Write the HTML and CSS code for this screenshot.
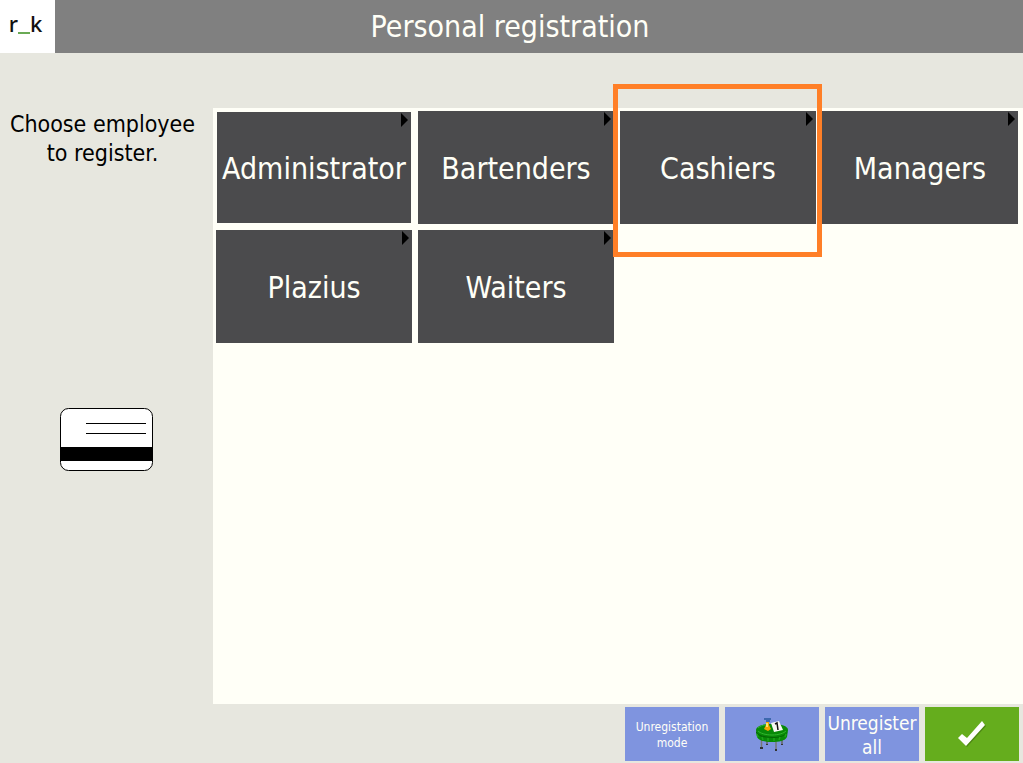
FILE: index.html
```html
<!DOCTYPE html>
<html lang="en">
<head>
  <meta charset="UTF-8" />
  <meta name="viewport" content="width=device-width, initial-scale=1.0" />
  <title>Personal registration</title>
  <link rel="stylesheet" href="styles.css">
</head>
<body>
  <header class="topbar">
    <div class="logo">r<span class="logo-dash"></span>k</div>
    <h1 class="title">Personal registration</h1>
  </header>

  <main class="content">
    <aside class="sidebar">
      <p class="hint">Choose employee<br>to register.</p>
      <svg class="card-icon" width="93" height="63" viewBox="0 0 93 63">
        <rect x="0.5" y="0.5" width="92" height="62" rx="8" fill="#fff" stroke="#000" />
        <path d="M26 15.5h60M26 25.5h60" stroke="#000" />
        <rect x="1" y="39" width="91" height="14" />
      </svg>
    </aside>

    <section class="groups">
      <button class="tile focused">Administrator</button>
      <button class="tile">Bartenders</button>
      <button class="tile highlighted">Cashiers</button>
      <button class="tile">Managers</button>
      <button class="tile">Plazius</button>
      <button class="tile">Waiters</button>
    </section>
  </main>

  <footer class="actions">
    <button class="action small">Unregistation<br>mode</button>
    <button class="action" aria-label="Tables">
      <svg width="34" height="34" viewBox="0 0 34 34">
        <path d="M12 22v5M27 22v5" stroke="#666" stroke-width="1.5" />
        <path d="M6.500 22v8M21 23v9" stroke="#777" stroke-width="1.5" />
        <path d="M5 29h3v2H5zM20 31h2v2h-2zM11 26h2v1h-2zM26 26h2v1h-2z" fill="#333" />
        <path d="M1 12c0-4 7-6 16-6s16 2 16 6l-1 7c-2 4-8 5-15 5S4 23 2 19z" fill="#088a08" />
        <path d="M1 13c2 4 8 6 16 6s14-2 16-6l-1 2c-3 4-8 5-15 5S4 19 1 15z" fill="#056604" />
        <path d="M3 10c2-2 5-3 8-3M3 13c2 2 7 4 14 4s12-2 14-4" fill="none" stroke="#32b52d" />
        <path d="M2 16l1 3M7 19l1 3M13 20v3M19 20v3M25 19l-1 3M31 16l-1 3" stroke="#1da51a" stroke-width="1.5" />
        <path d="M9 1h7M11 3h4" stroke="#285a9d" stroke-width="1.5" />
        <path d="M11 4h3v3l2 4-3 2-4-2 2-4z" fill="#f5a400" />
        <path d="M11 5h2v4h-2z" fill="#ffe366" />
        <path d="M16 5l8-2 4 9-9 2z" fill="#f8f8f3" />
        <path d="M20 6l2-1 1 7" fill="none" stroke="#111" stroke-width="1.5" />
      </svg>
    </button>
    <button class="action medium">Unregister<br>all</button>
    <button class="action confirm" aria-label="Confirm">
      <svg width="28" height="26" viewBox="0 0 28 26">
        <path d="M1 18l4-4 4 4L24 1l4 4L9 26z" fill="#4d8713" />
        <path d="M0 17l4-4 5 4L24 0l3 4L8 25z" fill="#fff" />
      </svg>
    </button>
  </footer>
</body>
</html>
```
FILE: styles.css
```css
* {
  box-sizing: border-box;
}
body {
  display: flex;
  flex-direction: column;
  min-height: 100vh;
  margin: 0;
  background: #e7e7df;
  color: #000;
  font-family: Tahoma, "DejaVu Sans Condensed", "Noto Sans", sans-serif;
}
button {
  border: none;
  padding: 0;
  color: #fffff7;
  font-family: inherit;
  cursor: pointer;
}
.topbar {
  display: flex;
  height: 53px;
  background: #808080;
}
.logo {
  width: 55px;
  padding-right: 4px;
  background: #fff;
  color: #111;
  font: 500 22px/46px "Noto Sans", sans-serif;
  text-align: center;
}
.logo-dash {
  display: inline-block;
  width: 12px;
  height: 2px;
  background: #6aaa55;
  vertical-align: -2px;
}
.title {
  flex: 1;
  margin: 0;
  padding-right: 58px;
  color: #fffff7;
  font-size: 30px;
  font-weight: normal;
  line-height: 53px;
  text-align: center;
}
.content {
  display: flex;
  flex: 1;
  padding-top: 55px;
}
.sidebar {
  width: 213px;
  text-align: center;
}
.hint {
  margin: 0 8px 240px 0;
  padding-top: 2px;
  font-size: 23px;
  line-height: 29px;
}
.card-icon {
  display: block;
  margin: 0 auto;
}
.groups {
  display: grid;
  flex: 1;
  grid-template-columns: repeat(4, 1fr);
  grid-auto-rows: 113px;
  gap: 6px;
  padding: 3px 5px 3px 3px;
  background: #fffff7;
}
.tile {
  position: relative;
  padding-top: 2px;
  background: #4b4b4d;
  font-size: 30px;
}
.tile::before {
  content: "";
  position: absolute;
  top: 1px;
  right: 3px;
  border: solid transparent;
  border-width: 7px 0 7px 7px;
  border-left-color: #000;
}
.focused {
  border: 1px solid #fffff7;
}
.highlighted {
  z-index: 1;
}
.highlighted::after {
  content: "";
  position: absolute;
  inset: -27px -6px -33px -7px;
  border: 5px solid #ff7f27;
}
.actions {
  display: flex;
  justify-content: flex-end;
  gap: 6px;
  padding: 3px 4px 2px;
}
.action {
  display: flex;
  align-items: center;
  justify-content: center;
  width: 94px;
  height: 54px;
  padding-top: 1px;
  background: #7f94df;
}
.small {
  font-size: 12px;
  line-height: 16px;
}
.medium {
  font-size: 19px;
  line-height: 24px;
}
.confirm {
  padding-top: 0;
  background: #65ad1d;
}
```
